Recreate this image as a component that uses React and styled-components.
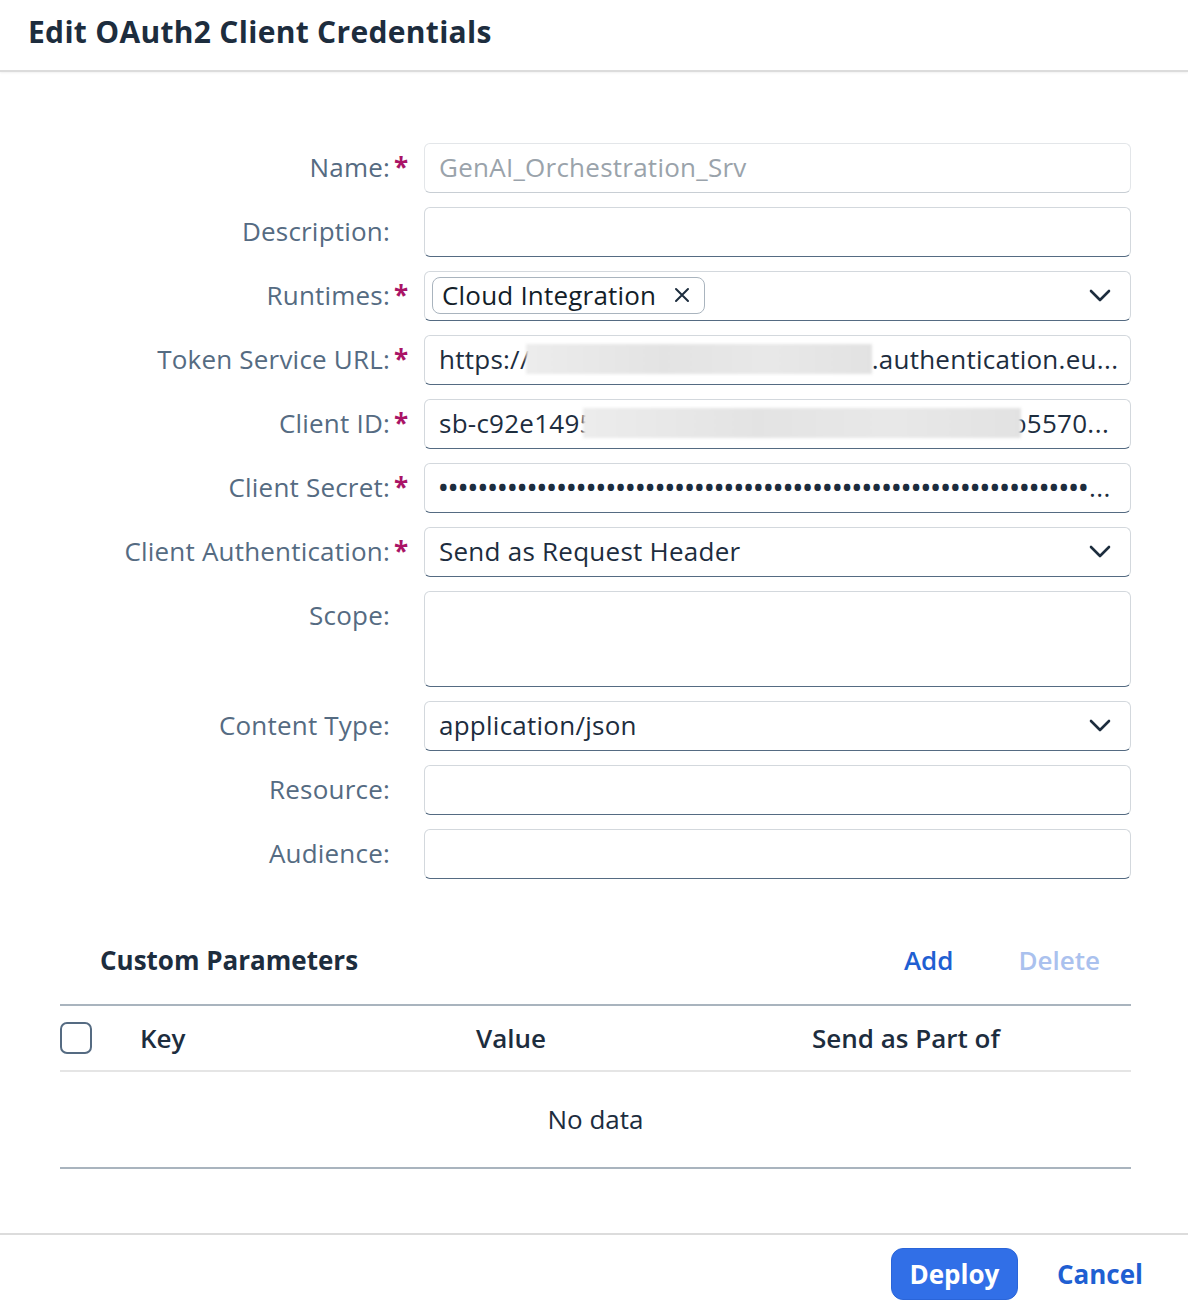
import React from "react";
import styled, { createGlobalStyle } from "styled-components";

const Global = createGlobalStyle`
  html, body { margin: 0; padding: 0; background: #ffffff; }
  body { font-family: "Open Sans", "Noto Sans", sans-serif; color: #1d2d3e; }
  * { box-sizing: border-box; }
`;

const Dialog = styled.div`
  width: 1188px;
  height: 1306px;
  display: flex;
  flex-direction: column;
  background: #fff;
  overflow: hidden;
`;

const Header = styled.header`
  height: 72px;
  padding: 0 28px 8px;
  display: flex;
  align-items: center;
  border-bottom: 2px solid #dcdcdc;
  box-shadow: 0 1px 2px rgba(0,0,0,0.06);
`;

const Title = styled.h1`
  margin: 0;
  font-size: 30px;
  font-weight: 700;
  color: #1d2d3e;
  letter-spacing: 0.3px;
`;

const Body = styled.div`
  flex: 1;
  display: flex;
  flex-direction: column;
  padding-top: 71px;
`;

const Form = styled.div`
  display: grid;
  grid-template-columns: 390px 34px 707px;
  row-gap: 14px;
`;

const Label = styled.div`
  font-size: 26px;
  line-height: 48px;
  height: 50px;
  text-align: right;
  color: #556b82;
  white-space: nowrap;
  letter-spacing: 0.2px;
`;

const Req = styled.div`
  font-size: 26px;
  line-height: 48px;
  height: 50px;
  padding-left: 4px;
  color: #aa1466;
  font-weight: 700;
`;

const Field = styled.div`
  height: ${(p) => (p.$tall ? "96px" : "50px")};
  border: 1px solid ${(p) => (p.$readonly ? "#e3e6e9" : "#d3d8dd")};
  border-bottom-color: ${(p) => (p.$readonly ? "#c8ced4" : "#556b82")};
  border-radius: 6px;
  background: #fff;
  display: flex;
  align-items: ${(p) => (p.$tall ? "flex-start" : "center")};
  padding: 0 19px 2px ${(p) => (p.$chip ? "7px" : "14px")};
  font-size: 26px;
  letter-spacing: 0.25px;
  color: ${(p) => (p.$readonly ? "#9aa3ab" : "#1d2d3e")};
  white-space: nowrap;
  overflow: hidden;
`;

const FieldText = styled.span`
  flex: 1;
  display: flex;
  align-items: center;
  min-width: 0;
`;

const Blur = styled.span`
  display: inline-block;
  width: ${(p) => p.$w}px;
  height: 30px;
  margin: 0 ${(p) => p.$mr || 0}px 0 ${(p) => p.$ml || 0}px;
  background: linear-gradient(90deg, #ececec 0%, #e3e3e3 40%, #e8e8e8 70%, #e2e2e2 100%);
  filter: blur(1.5px);
  position: relative;
  z-index: 1;
  flex-shrink: 0;
`;

const Dots = styled.span`
  font-size: 23px;
  letter-spacing: 1.2px;
  font-weight: 700;
  color: #1d2d3e;
`;

const Ellipsis = styled.span`
  letter-spacing: 0.5px;
`;

const Chip = styled.span`
  display: inline-flex;
  align-items: center;
  gap: 18px;
  height: 37px;
  padding: 0 14px 0 9px;
  border: 1px solid #a9b4be;
  border-radius: 8px;
  color: #131e29;
  font-size: 26px;
  letter-spacing: 0.2px;
`;

const Chevron = () => (
  <svg width="22" height="13" viewBox="0 0 22 13" style={{ flexShrink: 0 }}>
    <path d="M2 2 L11 11 L20 2" fill="none" stroke="#1d2d3e" strokeWidth="2.6" strokeLinecap="round" strokeLinejoin="round" />
  </svg>
);

const Cross = () => (
  <svg width="16" height="16" viewBox="0 0 16 16">
    <path d="M2 2 L14 14 M14 2 L2 14" fill="none" stroke="#1d2d3e" strokeWidth="2" strokeLinecap="round" />
  </svg>
);

const Section = styled.section`
  margin-top: 48px;
  margin-left: 60px;
  width: 1071px;
  display: flex;
  flex-direction: column;
`;

const Toolbar = styled.div`
  height: 66px;
  margin-bottom: 11px;
  display: flex;
  align-items: center;
  padding: 0 31px 0 40px;
  gap: 65px;
`;

const SectionTitle = styled.h2`
  margin: 0;
  flex: 1;
  font-size: 26px;
  font-weight: 700;
  color: #1d2d3e;
`;

const LinkButton = styled.button`
  border: none;
  background: none;
  padding: 0;
  font-family: inherit;
  font-size: 26px;
  font-weight: 600;
  color: ${(p) => (p.disabled ? "#aac1ee" : "#1f5fd2")};
  cursor: pointer;
`;

const Table = styled.div`
  border-top: 2px solid #a9b4be;
  border-bottom: 2px solid #a9b4be;
`;

const HeadRow = styled.div`
  display: grid;
  grid-template-columns: 80px 336px 336px 1fr;
  align-items: center;
  height: 66px;
  border-bottom: 2px solid #e5e5e5;
`;

const HeadCell = styled.div`
  font-size: 26px;
  font-weight: 600;
  color: #1d2d3e;
`;

const Checkbox = styled.span`
  display: block;
  width: 32px;
  height: 32px;
  border: 2px solid #556b82;
  border-radius: 7px;
`;

const Empty = styled.div`
  height: 95px;
  padding-bottom: 2px;
  display: flex;
  align-items: center;
  justify-content: center;
  font-size: 26px;
  color: #1d2d3e;
`;

const Footer = styled.footer`
  margin-top: 64px;
  border-top: 2px solid #dcdcdc;
  padding: 13px 45px 0 0;
  display: flex;
  justify-content: flex-end;
  align-items: center;
  gap: 39px;
`;

const Primary = styled.button`
  width: 127px;
  height: 52px;
  padding: 0;
  border-radius: 12px;
  border: 1px solid #2a65d9;
  background: #316fe7;
  color: #fff;
  font-family: inherit;
  font-size: 26px;
  font-weight: 700;
`;

const Ghost = styled.button`
  border: none;
  background: none;
  padding: 0;
  font-family: inherit;
  font-size: 26px;
  font-weight: 700;
  color: #1f5fd2;
`;

const rows = [
  { label: "Name:", req: true, content: <Field $readonly>GenAI_Orchestration_Srv</Field> },
  { label: "Description:", content: <Field /> },
  {
    label: "Runtimes:",
    req: true,
    content: (
      <Field $chip>
        <FieldText>
          <Chip>Cloud Integration<Cross /></Chip>
        </FieldText>
        <Chevron />
      </Field>
    ),
  },
  {
    label: "Token Service URL:",
    req: true,
    content: (
      <Field>
        <FieldText>https://<Blur $w={346} $ml={-4} />.authentication.eu<Ellipsis>...</Ellipsis></FieldText>
      </Field>
    ),
  },
  {
    label: "Client ID:",
    req: true,
    content: (
      <Field>
        <FieldText>sb-c92e1495<Blur $w={438} $ml={-12} $mr={-10} />b5570<Ellipsis>...</Ellipsis></FieldText>
      </Field>
    ),
  },
  {
    label: "Client Secret:",
    req: true,
    content: (
      <Field>
        <FieldText>
          <Dots>{"•".repeat(66)}</Dots><Ellipsis>...</Ellipsis>
        </FieldText>
      </Field>
    ),
  },
  {
    label: "Client Authentication:",
    req: true,
    content: (
      <Field>
        <FieldText>Send as Request Header</FieldText>
        <Chevron />
      </Field>
    ),
  },
  { label: "Scope:", content: <Field $tall /> },
  {
    label: "Content Type:",
    content: (
      <Field>
        <FieldText>application/json</FieldText>
        <Chevron />
      </Field>
    ),
  },
  { label: "Resource:", content: <Field /> },
  { label: "Audience:", content: <Field /> },
];

export default function App() {
  return (
    <>
      <Global />
      <Dialog>
        <Header>
          <Title>Edit OAuth2 Client Credentials</Title>
        </Header>
        <Body>
          <Form>
            {rows.map((r) => (
              <React.Fragment key={r.label}>
                <Label>{r.label}</Label>
                <Req>{r.req ? "*" : ""}</Req>
                {r.content}
              </React.Fragment>
            ))}
          </Form>
          <Section>
            <Toolbar>
              <SectionTitle>Custom Parameters</SectionTitle>
              <LinkButton>Add</LinkButton>
              <LinkButton disabled>Delete</LinkButton>
            </Toolbar>
            <Table>
              <HeadRow>
                <div><Checkbox /></div>
                <HeadCell>Key</HeadCell>
                <HeadCell>Value</HeadCell>
                <HeadCell>Send as Part of</HeadCell>
              </HeadRow>
              <Empty>No data</Empty>
            </Table>
          </Section>
          <Footer>
            <Primary>Deploy</Primary>
            <Ghost>Cancel</Ghost>
          </Footer>
        </Body>
      </Dialog>
    </>
  );
}
